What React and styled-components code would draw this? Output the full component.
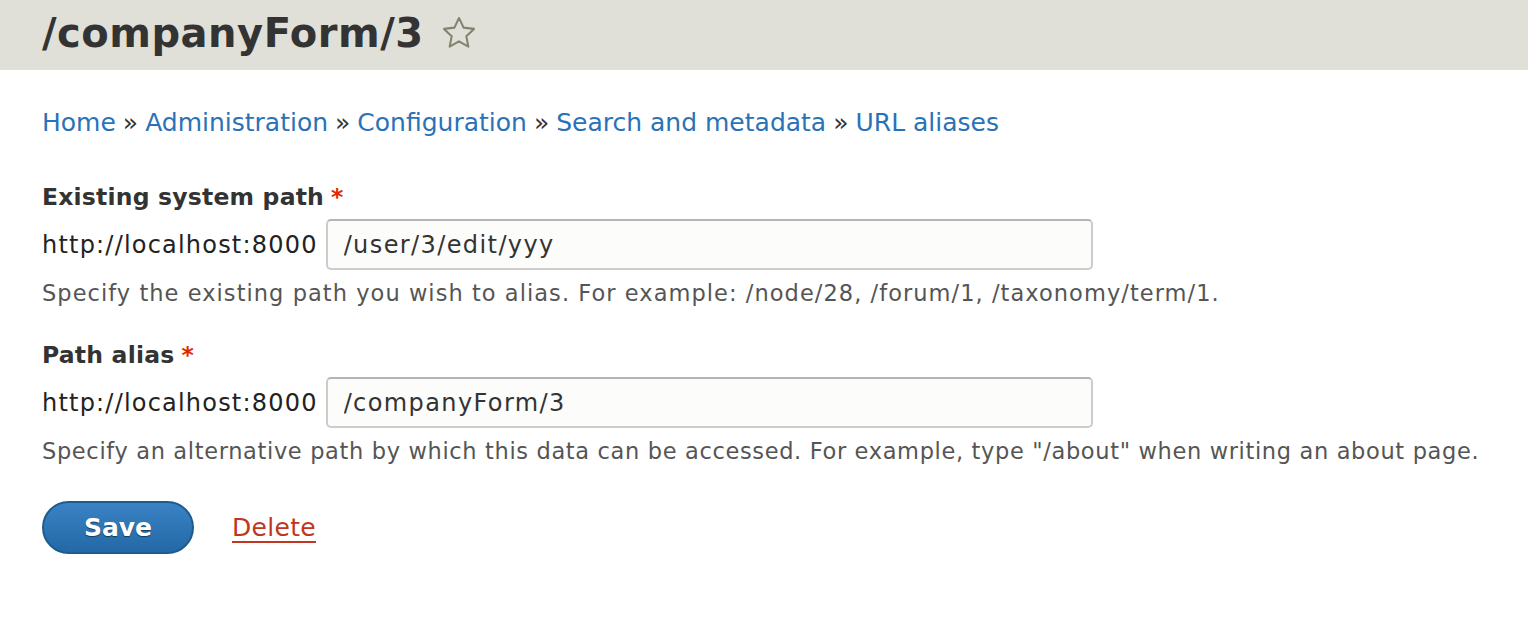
import styled, { createGlobalStyle } from "styled-components";

const GlobalStyle = createGlobalStyle`
  body {
    margin: 0;
    background: #fff;
    font-family: "DejaVu Sans", "Liberation Sans", sans-serif;
    color: #333;
  }
`;

const Header = styled.header`
  height: 70px;
  background: #e0e0d8;
  display: flex;
  align-items: center;
  padding: 0 42px;
`;

const Title = styled.h1`
  margin: 0 0 5px;
  font-size: 40px;
  font-weight: bold;
  color: #333;
  letter-spacing: 0.5px;
`;

const Star = styled.svg`
  width: 38px;
  height: 38px;
  margin-left: 16px;
  margin-bottom: 4px;
`;

const Main = styled.main`
  padding: 0 42px;
`;

const Breadcrumb = styled.nav`
  font-size: 25px;
  margin-top: 38px;
  color: #333;
`;

const Crumb = styled.a`
  color: #2a72b8;
  text-decoration: none;
`;

const Sep = styled.span`
  margin: 0 7px;
`;

const Field = styled.div`
  margin-top: ${(p) => p.$top}px;
`;

const Label = styled.label`
  display: block;
  font-size: 23.5px;
  font-weight: bold;
  color: #333;
  letter-spacing: 0.2px;
`;

const Required = styled.span`
  color: #e32700;
  margin-left: 7px;
`;

const InputRow = styled.div`
  display: flex;
  align-items: center;
  margin-top: 8px;
  font-size: 24px;
  letter-spacing: 1.2px;
  color: #222;
`;

const Input = styled.input`
  box-sizing: border-box;
  width: 767px;
  height: 51px;
  margin-left: 8px;
  padding: 0 16px;
  border: 2px solid #ccc;
  border-top-color: #b4b4b4;
  border-radius: 5px;
  background: #fcfcfa;
  font-family: inherit;
  font-size: 24px;
  letter-spacing: 1.4px;
  color: #333;
`;

const Description = styled.div`
  margin-top: 10px;
  font-size: 22.5px;
  letter-spacing: ${(p) => p.$spacing}px;
  white-space: nowrap;
  color: #555;
`;

const Actions = styled.div`
  display: flex;
  align-items: center;
  margin-top: 37px;
`;

const SaveButton = styled.button`
  width: 152px;
  height: 53px;
  border-radius: 27px;
  border: 2px solid #1e5c90;
  background: linear-gradient(#3a82c4, #2369a6);
  color: #fff;
  font-family: inherit;
  font-size: 25px;
  font-weight: bold;
  text-shadow: 0 1px 1px rgba(0, 0, 0, 0.5);
`;

const DeleteLink = styled.a`
  margin-left: 38px;
  font-size: 25px;
  letter-spacing: 0.3px;
  color: #c2351e;
  text-decoration: underline;
  text-underline-offset: 5px;
`;

const fields = [
  {
    label: "Existing system path",
    value: "/user/3/edit/yyy",
    desc: "Specify the existing path you wish to alias. For example: /node/28, /forum/1, /taxonomy/term/1.",
    top: 46,
    spacing: 1.05,
  },
  {
    label: "Path alias",
    value: "/companyForm/3",
    desc: 'Specify an alternative path by which this data can be accessed. For example, type "/about" when writing an about page.',
    top: 35,
    spacing: 0.65,
  },
];

const crumbs = ["Home", "Administration", "Configuration", "Search and metadata", "URL aliases"];

export default function App() {
  return (
    <>
      <GlobalStyle />
      <Header>
        <Title>/companyForm/3</Title>
        <Star viewBox="0 0 24 24">
          <path
            d="M12 2.5l2.9 6.1 6.6.8-4.9 4.6 1.3 6.6L12 17.3l-5.9 3.3 1.3-6.6-4.9-4.6 6.6-.8z"
            fill="none"
            stroke="#85836f"
            strokeWidth="1.3"
            strokeLinejoin="round"
          />
        </Star>
      </Header>
      <Main>
        <Breadcrumb>
          {crumbs.map((c, i) => (
            <span key={c}>
              {i > 0 && <Sep>»</Sep>}
              <Crumb href="#">{c}</Crumb>
            </span>
          ))}
        </Breadcrumb>
        {fields.map((f) => (
          <Field key={f.label} $top={f.top}>
            <Label>
              {f.label}
              <Required>*</Required>
            </Label>
            <InputRow>
              http://localhost:8000
              <Input defaultValue={f.value} />
            </InputRow>
            <Description $spacing={f.spacing}>{f.desc}</Description>
          </Field>
        ))}
        <Actions>
          <SaveButton>Save</SaveButton>
          <DeleteLink href="#">Delete</DeleteLink>
        </Actions>
      </Main>
    </>
  );
}
